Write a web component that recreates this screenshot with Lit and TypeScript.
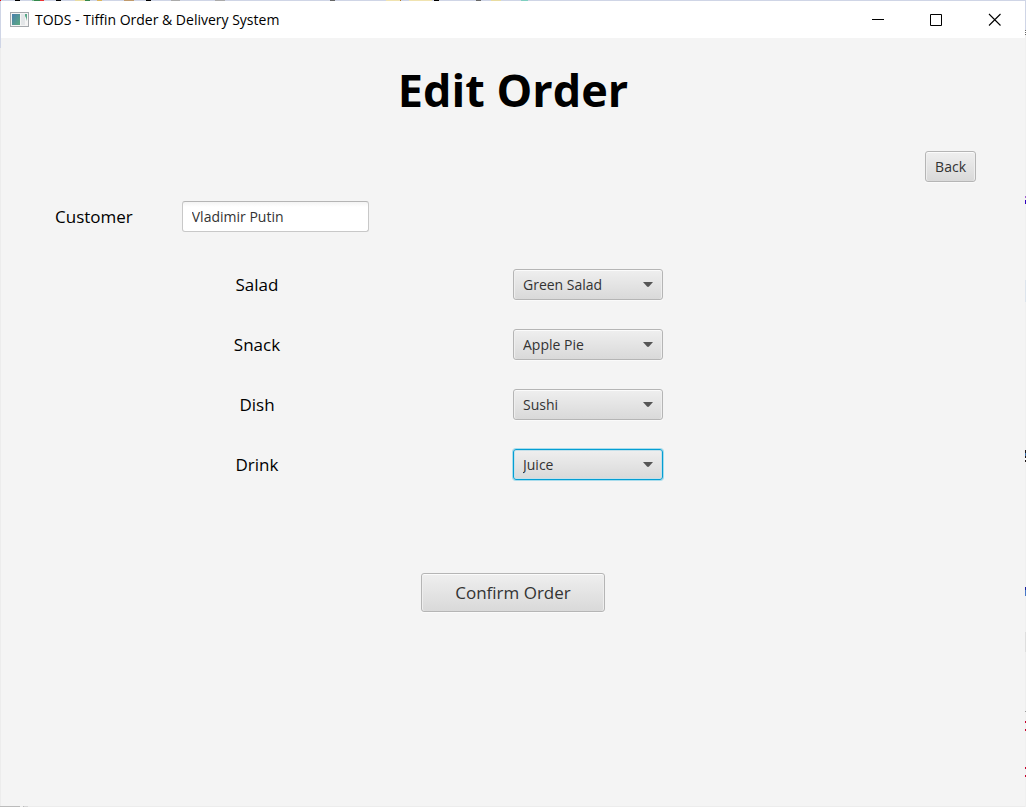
import { LitElement, html, css } from "lit";
import { customElement, state } from "lit/decorators.js";

interface Course {
  id: string;
  label: string;
  value: string;
  options: string[];
}

@customElement("app-root")
export class AppRoot extends LitElement {
  static styles = css`
    :host {
      display: block;
      font-family: "Open Sans", "Noto Sans", sans-serif;
      color: #000;
    }
    * {
      box-sizing: border-box;
    }
    /* The one-pixel padding lets the desktop behind the window show at its edges. */
    .desktop {
      display: flex;
      min-height: 100vh;
      padding: 1px;
      background:
        linear-gradient(90deg, #e00 1px, transparent 1px 15px, #000 15px 20px, transparent 20px 32px,
          #7cc3a0 32px 34px, #36874a 34px 40px, #e33 40px 44px, transparent 44px 56px, #000 56px 61px,
          transparent 61px 75px, #e8dca0 75px 85px, #36874a 85px 90px, transparent 90px 97px,
          #dcb45a 97px 102px, transparent 102px 124px, #c09a6c 124px 134px, transparent 134px 146px,
          #000 146px 151px, transparent 151px 171px, #aaa 171px 180px, transparent 180px 215px,
          #aaa 215px 225px, transparent 225px 330px, #666 330px 335px, transparent 335px 386px,
          #f0e3b0 386px 400px, #b87a20 400px 401px, transparent 401px 409px, #f0e3b0 409px 432px,
          transparent 432px 434px, #000 434px 439px, transparent 439px 476px, #666 476px 481px,
          transparent 481px 491px, #e8dca0 491px 501px, transparent 501px 521px, #7fcfc0 521px 528px,
          transparent 528px) 0 0 / 100% 1px no-repeat,
        linear-gradient(#cfd5e6 30px, #666 30px 31px, #fff 31px 32px, #666 32px 33px, #fff 33px 34px,
          #666 34px 35px, #f0f0f0 35px 196px, #a060d0 196px 198px, #f0f0f0 198px 200px,
          #3000c0 200px 204px, #f0f0f0 204px 280px, #dde4ec 280px 302px, #f0f0f0 302px 450px,
          #201818 450px 453px, #3a6ea8 453px 456px, #201818 456px 458px, #fff 458px 460px,
          #201818 460px 462px, #f0f0f0 462px 587px, #1820a0 587px 590px, #4878c8 590px 596px,
          #f0f0f0 596px 632px, #dedede 632px 652px, #eee 652px 711px, #999 711px 712px,
          #f0f0f0 712px 721px, #c8002a 721px 723px, #f0f0f0 723px 729px, #c8002a 729px 731px,
          #f0f0f0 731px 767px, #c8002a 767px 769px, #f0f0f0 769px 775px, #c8002a 775px 777px,
          #f0f0f0 777px) 100% 0 / 1px 100% no-repeat,
        linear-gradient(90deg, #bbb 20px, #eee 20px 23px, #bbb 23px 24px, #d5d5d5 24px 28px,
          #ececec 28px) 0 100% / 100% 1px no-repeat,
        linear-gradient(#cfd5e6 48px, #ececec 48px);
    }
    .window {
      flex: 1;
      background: #f4f4f4;
    }
    .titlebar {
      display: flex;
      align-items: center;
      height: 37px;
      padding: 0 2px 0 9px;
      background: #fff;
      font-size: 14px;
    }
    .app-icon {
      width: 19px;
      height: 15px;
      margin-right: 6px;
    }
    .title {
      flex: 1;
    }
    .win-button {
      display: grid;
      place-items: center;
      width: 58px;
      height: 36px;
      padding: 0;
      border: 0;
      background: none;
    }
    .win-button svg {
      width: 13px;
      height: 13px;
    }
    .window-buttons {
      display: flex;
    }
    h1 {
      margin: 22px 0 0;
      font-size: 45px;
      line-height: 60px;
      font-weight: 700;
      text-align: center;
    }
    .toolbar {
      display: flex;
      justify-content: flex-end;
      padding: 31px 49px 0;
    }
    button,
    input,
    select {
      font-family: inherit;
    }
    .control {
      height: 31px;
      border: 1px solid #b5b5b5;
      border-radius: 3px;
      background: linear-gradient(#efefef, #d9d9d9);
      box-shadow: inset 0 1px #fbfbfb, inset 1px 0 #eeeeee, inset -1px 0 #eeeeee, 0 1px #fafafa;
      color: #333;
      font-size: 14px;
      outline: none;
    }
    .back {
      padding: 0 9px;
    }
    .customer {
      display: flex;
      align-items: center;
      gap: 49px;
      padding: 19px 54px 0;
    }
    label {
      font-size: 17px;
      line-height: 24px;
    }
    .customer input {
      width: 187px;
      height: 31px;
      padding: 0 9px;
      border: 1px solid #c8c8c8;
      border-top-color: #b5b5b5;
      border-radius: 3px;
      background: linear-gradient(#f4f4f4, #fff 5px);
      color: #333;
      font-size: 14px;
      outline: none;
    }
    .courses {
      display: grid;
      gap: 29px;
      padding-top: 37px;
    }
    .course {
      display: grid;
      grid-template-columns: 1fr 1fr;
      align-items: center;
    }
    .course label {
      justify-self: center;
    }
    .picker {
      display: grid;
      align-items: center;
      width: 150px;
    }
    .picker select,
    .picker svg {
      grid-area: 1 / 1;
    }
    .picker select {
      width: 100%;
      padding: 0 28px 0 9px;
      appearance: none;
    }
    .picker select:focus,
    .picker select.active {
      border-color: #039ed3;
      box-shadow: 0 0 0 1px #a8dcec, inset 0 0 0 1px #c4e0ea;
    }
    .picker svg {
      justify-self: end;
      width: 10px;
      height: 5px;
      margin-right: 10px;
      pointer-events: none;
    }
    .actions {
      display: flex;
      justify-content: center;
      padding-top: 93px;
    }
    .confirm {
      width: 184px;
      height: 39px;
      font-size: 17px;
    }
  `;

  @state() private active = "drink";

  @state() private courses: Course[] = [
    { id: "salad", label: "Salad", value: "Green Salad", options: ["Green Salad"] },
    { id: "snack", label: "Snack", value: "Apple Pie", options: ["Apple Pie"] },
    { id: "dish", label: "Dish", value: "Sushi", options: ["Sushi"] },
    { id: "drink", label: "Drink", value: "Juice", options: ["Juice"] },
  ];

  private renderCourse(course: Course) {
    return html`
      <div class="course">
        <label for=${course.id}>${course.label}</label>
        <div class="picker">
          <select
            id=${course.id}
            class="control ${this.active === course.id ? "active" : ""}"
            .value=${course.value}
            @focus=${() => (this.active = course.id)}
          >
            ${course.options.map((o) => html`<option>${o}</option>`)}
          </select>
          <svg viewBox="0 0 10 5" aria-hidden="true">
            <path d="M0 0H10L6 4.6Q5 5.4 4 4.6Z" fill="#555" />
          </svg>
        </div>
      </div>
    `;
  }

  render() {
    return html`
      <div class="desktop">
        <div class="window">
          <header class="titlebar">
            <svg class="app-icon" viewBox="0 0 19 15" aria-hidden="true">
              <defs>
                <linearGradient id="pane" x1="0" y1="0" x2="1" y2="1">
                  <stop offset="0" stop-color="#4a7fae" />
                  <stop offset="1" stop-color="#5cab80" />
                </linearGradient>
              </defs>
              <rect x="0.5" y="0.5" width="18" height="14" fill="#f5f5f5" stroke="#a5a9ad" />
              <rect x="2" y="2" width="8" height="11" fill="url(#pane)" />
              <rect x="11" y="2" width="4" height="11" fill="#e3e6e8" />
              <path d="M15 2h2v7q-.5-3-2-5z" fill="#58a888" />
            </svg>
            <span class="title">TODS - Tiffin Order &amp; Delivery System</span>
            <div class="window-buttons">
              <button class="win-button" aria-label="Minimize">
                <svg viewBox="0 0 13 13"><path d="M0 6.5H12" stroke="#000" fill="none" /></svg>
              </button>
              <button class="win-button" aria-label="Maximize">
                <svg viewBox="0 0 13 13"><path d="M.5 1.5h11v11h-11z" stroke="#000" fill="none" /></svg>
              </button>
              <button class="win-button" aria-label="Close">
                <svg viewBox="0 0 13 13"><path d="M1 1l11.5 11.5M12.5 1L1 12.5" stroke="#000" stroke-width="1.1" fill="none" /></svg>
              </button>
            </div>
          </header>
          <main>
            <h1>Edit Order</h1>
            <div class="toolbar"><button class="control back">Back</button></div>
            <div class="customer">
              <label for="customer">Customer</label>
              <input id="customer" type="text" value="Vladimir Putin" />
            </div>
            <div class="courses">${this.courses.map((c) => this.renderCourse(c))}</div>
            <div class="actions"><button class="control confirm">Confirm Order</button></div>
          </main>
        </div>
      </div>
    `;
  }
}
